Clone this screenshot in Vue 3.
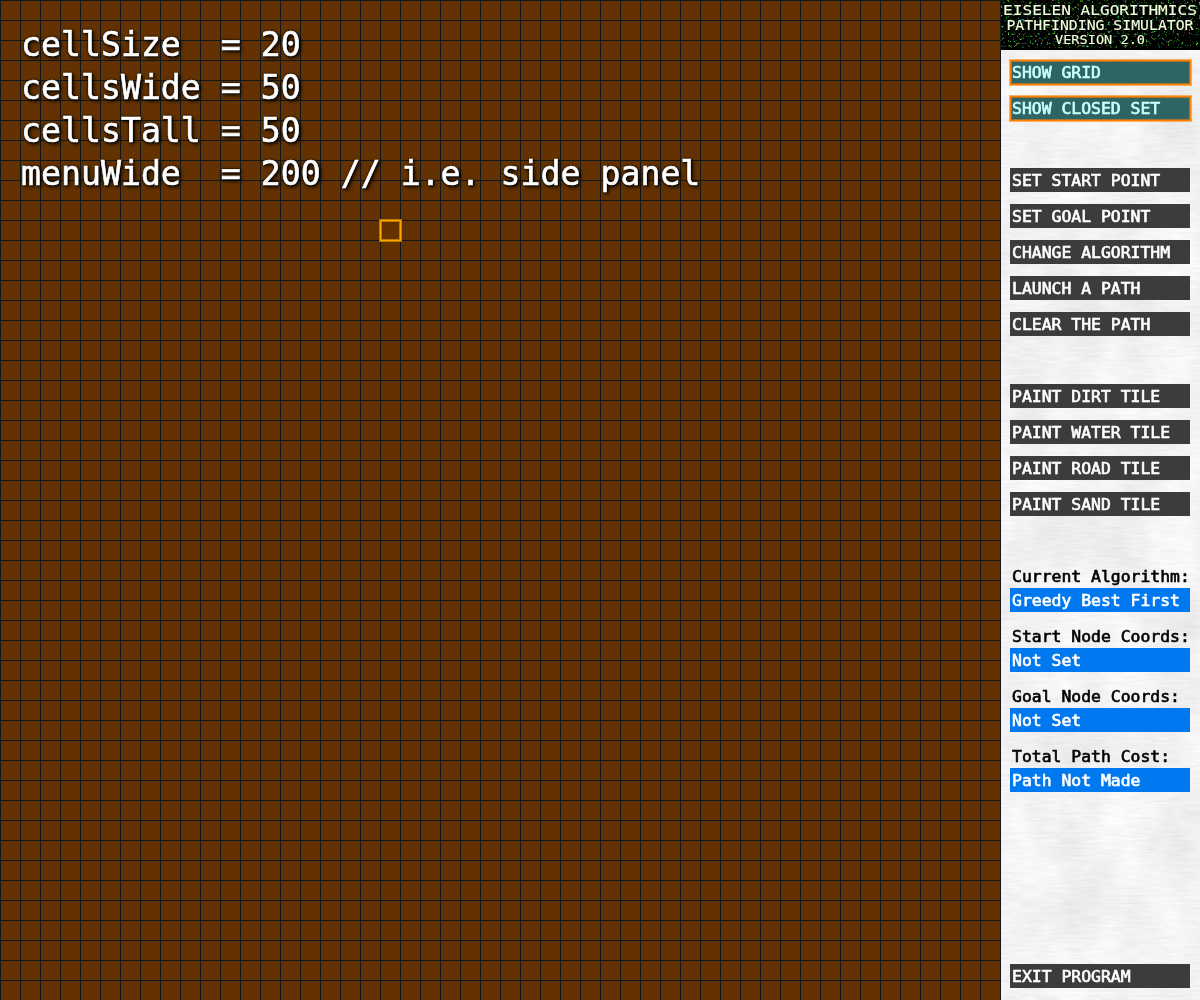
<script setup>
const settings = [
  'cellSize  = 20',
  'cellsWide = 50',
  'cellsTall = 50',
  'menuWide  = 200 // i.e. side panel',
]
const groups = [
  { name: 'toggles', active: true, items: ['SHOW GRID', 'SHOW CLOSED SET'] },
  { name: 'path', items: ['SET START POINT', 'SET GOAL POINT', 'CHANGE ALGORITHM', 'LAUNCH A PATH', 'CLEAR THE PATH'] },
  { name: 'paint', items: ['PAINT DIRT TILE', 'PAINT WATER TILE', 'PAINT ROAD TILE', 'PAINT SAND TILE'] },
]
const readouts = [
  { label: 'Current Algorithm:', value: 'Greedy Best First' },
  { label: 'Start Node Coords:', value: 'Not Set' },
  { label: 'Goal Node Coords:', value: 'Not Set' },
  { label: 'Total Path Cost:', value: 'Path Not Made' },
]
</script>

<template>
  <div class="app">
    <main class="board">
      <div class="settings">
        <div v-for="line in settings" :key="line" class="setting"><span>{{ line }}</span></div>
      </div>
      <div class="cursor"></div>
    </main>
    <aside class="menu">
      <svg class="texture" width="199" height="1000" aria-hidden="true">
        <filter id="brushed" x="0" y="0" width="100%" height="100%" color-interpolation-filters="sRGB">
          <feTurbulence type="fractalNoise" baseFrequency="0.05 0.4" numOctaves="3" seed="4" result="fine" />
          <feColorMatrix in="fine" type="matrix" values="0.07 0 0 0 0.91  0.07 0 0 0 0.91  0.07 0 0 0 0.91  0 0 0 0 1" result="a" />
          <feTurbulence type="fractalNoise" baseFrequency="0.02 0.014" numOctaves="3" seed="9" />
          <feColorMatrix type="matrix" values="0.1 0 0 0 0.455  0.1 0 0 0 0.455  0.1 0 0 0 0.455  0 0 0 0 1" result="b" />
          <feComposite in="a" in2="b" operator="arithmetic" k1="0" k2="1" k3="1" k4="-0.5" />
        </filter>
        <rect width="199" height="1000" filter="url(#brushed)" />
      </svg>
      <header class="banner">
        <svg class="static" width="199" height="48" aria-hidden="true">
          <filter id="speckle" x="0" y="0" width="100%" height="100%" color-interpolation-filters="sRGB">
            <feTurbulence type="fractalNoise" baseFrequency="0.42" numOctaves="2" seed="12" />
            <feColorMatrix type="matrix" values="1 1.6 0 0 -1.5  0 3.4 0 0 -1.95  0 1.6 1 0 -1.5  0 0 0 0 1" />
          </filter>
          <rect width="199" height="48" filter="url(#speckle)" />
        </svg>
        <div class="title t1"><span>EISELEN ALGORITHMICS</span></div>
        <div class="title t2"><span>PATHFINDING SIMULATOR</span></div>
        <div class="title t3"><span>VERSION 2.0</span></div>
      </header>
      <nav class="controls">
        <div v-for="g in groups" :key="g.name" class="group" :class="g.name">
          <button v-for="b in g.items" :key="b" class="bar" :class="{ active: g.active }"><span>{{ b }}</span></button>
        </div>
      </nav>
      <section class="readouts">
        <div v-for="r in readouts" :key="r.label" class="readout">
          <div class="label"><span>{{ r.label }}</span></div>
          <div class="value"><span>{{ r.value }}</span></div>
        </div>
      </section>
      <button class="bar exit"><span>EXIT PROGRAM</span></button>
    </aside>
  </div>
</template>

<style>
body { margin: 0; overflow: hidden; }
</style>

<style scoped>
.app {
  display: flex;
  width: 1200px;
  height: 1000px;
  font-family: "DejaVu Sans Mono", monospace;
}
.board {
  position: relative;
  box-sizing: border-box;
  width: 1001px;
  height: 1000px;
  padding: 23px 0 0 21px;
  background-color: #643200;
  background-image:
    linear-gradient(to right, #10181d 1px, transparent 1px),
    linear-gradient(to bottom, #10181d 1px, transparent 1px);
  background-size: 20px 20px;
}
.setting {
  height: 43px;
  line-height: 43px;
  font-size: 33.2px;
  white-space: pre;
  color: #fff;
  -webkit-text-stroke: 0.6px #fff;
  text-shadow: 1px 1px 2px #000, 2px 2px 4px #000, 0 0 3px #000;
}
.setting span {
  display: inline-block;
  transform: scaleY(1.02);
}
.cursor {
  position: absolute;
  left: 380px;
  top: 220px;
  width: 19px;
  height: 19px;
  border: 1px solid #ffa500;
  box-shadow: 0 0 0 1px rgba(255, 165, 0, 0.6), inset 0 0 0 1px rgba(255, 165, 0, 0.6);
}
.menu {
  position: relative;
  display: flex;
  flex-direction: column;
  width: 199px;
  height: 1000px;
  background: #f2f2f2;
}
.texture, .static {
  position: absolute;
  left: 0;
  top: 0;
  display: block;
}
.banner {
  position: relative;
  height: 50px;
  background: #000;
  overflow: hidden;
}
.title {
  position: relative;
  display: flex;
  justify-content: center;
  box-sizing: border-box;
  white-space: pre;
  color: #f0ffdc;
  -webkit-text-stroke: 0.15px #f0ffdc;
  text-shadow: 0 0 2px #000, 0 0 2px #000, 0 0 1px #000;
}
.title span {
  display: block;
  transform: scaleY(0.92);
}
.t1 { height: 17px; padding: 2px 1px 0 0; font-size: 16.1px; line-height: 17px; }
.t2 { height: 15px; padding-right: 1px; font-size: 14.8px; line-height: 17px; }
.t3 { height: 14px; padding-right: 1px; font-size: 13.6px; line-height: 14px; }
.controls {
  position: relative;
  display: flex;
  flex-direction: column;
  gap: 48px;
  padding: 10px 10px 0 9px;
}
.group {
  display: flex;
  flex-direction: column;
  gap: 12px;
}
.bar, .label, .value {
  position: relative;
  display: block;
  box-sizing: border-box;
  width: 180px;
  height: 24px;
  margin: 0;
  padding: 1px 0 0 2px;
  border: 0;
  font-family: inherit;
  font-size: 16.42px;
  line-height: 24px;
  text-align: left;
  white-space: pre;
  color: #fff;
  -webkit-text-stroke: 0.65px currentColor;
}
.bar { background: #3c3c3c; }
.bar span, .label span, .value span {
  display: block;
  height: 23px;
  transform: scaleY(0.93);
}
.active {
  background: #2f6464;
  color: #c8ffff;
}
.active::after {
  content: "";
  position: absolute;
  left: 0;
  top: 0;
  width: 179px;
  height: 23px;
  border: 1px solid #ff8000;
  box-shadow: 0 0 0 1px rgba(255, 128, 0, 0.6), inset 0 0 0 1px rgba(255, 128, 0, 0.6);
}
.readouts {
  position: relative;
  display: flex;
  flex-direction: column;
  gap: 12px;
  padding: 48px 10px 0 9px;
}
.label { color: #000; }
.value { background: #0078f0; }
.exit { margin: auto 10px 12px 9px; }
</style>
